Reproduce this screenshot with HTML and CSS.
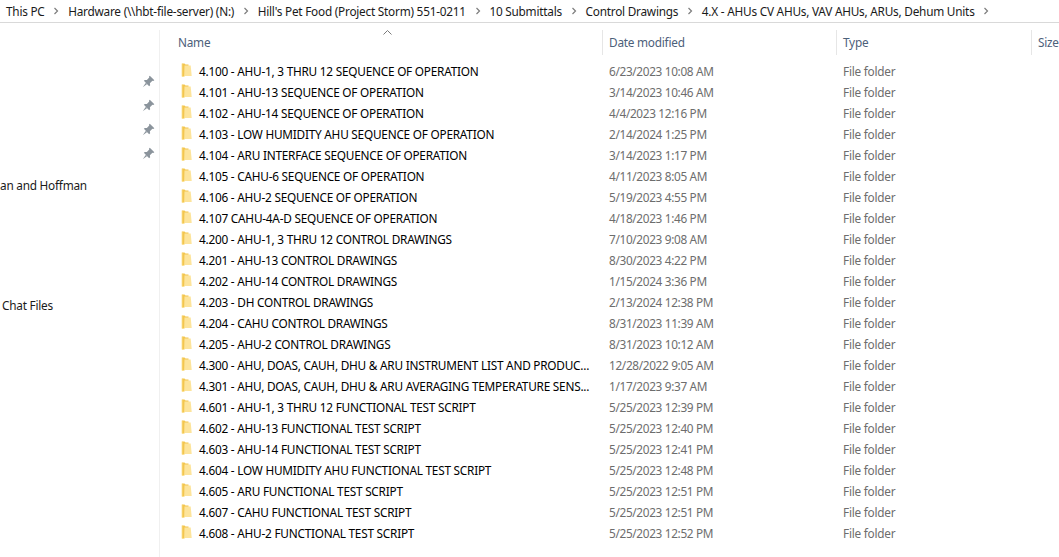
FILE: index.html
```html
<!DOCTYPE html>
<html lang="en">
<head>
<meta charset="utf-8">
<title>4.X - AHUs CV AHUs, VAV AHUs, ARUs, Dehum Units</title>
<link rel="stylesheet" href="styles.css">
</head>
<body>
<svg class="defs" width="0" height="0" aria-hidden="true">
  <defs>
    <symbol id="folder" viewBox="0 0 11 14">
      <path d="M1 .5h2.5l1 1H7.5v10L3 13.5H1z" fill="#f3c64f"/>
      <path d="M3.5 2.5h6.2l1 10.5H3.2z" fill="#fde49b"/>
      <path d="M1 .5v13h2" fill="none" stroke="#fbe08e" stroke-width=".8"/>
    </symbol>
    <symbol id="pin" viewBox="0 0 12 12">
      <path d="M7.2.6l4.2 4.2-1 .8-.8-.3L7.3 7.5l.2 1.9-.9.9L1.7 5.4l.9-.9 1.9.2 2.2-2.3-.3-.8z" fill="#8b949c"/>
      <path d="M3.6 7.2L.7 11.3l4.1-2.9z" fill="#8b949c"/>
    </symbol>
    <symbol id="chev" viewBox="0 0 6 8">
      <path d="M1.5 1l3 3-3 3" fill="none" stroke="#7d7d7d" stroke-width="1.2"/>
    </symbol>
  </defs>
</svg>

<nav class="crumbs">
  <span>This PC</span><svg class="chev"><use href="#chev"/></svg>
  <span>Hardware (\\hbt-file-server) (N:)</span><svg class="chev"><use href="#chev"/></svg>
  <span>Hill's Pet Food (Project Storm) 551-0211</span><svg class="chev"><use href="#chev"/></svg>
  <span>10 Submittals</span><svg class="chev"><use href="#chev"/></svg>
  <span>Control Drawings</span><svg class="chev"><use href="#chev"/></svg>
  <span>4.X - AHUs CV AHUs, VAV AHUs, ARUs, Dehum Units</span><svg class="chev"><use href="#chev"/></svg>
</nav>

<div class="main">
  <aside class="side">
    <div class="pins">
      <svg class="pin"><use href="#pin"/></svg>
      <svg class="pin"><use href="#pin"/></svg>
      <svg class="pin"><use href="#pin"/></svg>
      <svg class="pin"><use href="#pin"/></svg>
    </div>
    <div class="side-item first">an and Hoffman</div>
    <div class="side-item second">Chat Files</div>
  </aside>

  <section class="list">
    <div class="head">
      <svg class="caret" width="9" height="5" viewBox="0 0 9 5"><path d="M.5 4.5l4-4 4 4" fill="none" stroke="#7a7a7a"/></svg>
      <div class="hcell hname">Name</div>
      <div class="hcell">Date modified</div>
      <div class="hcell">Type</div>
      <div class="hcell">Size</div>
    </div>
    <div class="rows">
      <div class="row"><div class="name"><svg class="folder"><use href="#folder"/></svg><span>4.100 - AHU-1, 3 THRU 12 SEQUENCE OF OPERATION</span></div><div class="date">6/23/2023 10:08 AM</div><div class="type">File folder</div></div>
      <div class="row"><div class="name"><svg class="folder"><use href="#folder"/></svg><span>4.101 - AHU-13 SEQUENCE OF OPERATION</span></div><div class="date">3/14/2023 10:46 AM</div><div class="type">File folder</div></div>
      <div class="row"><div class="name"><svg class="folder"><use href="#folder"/></svg><span>4.102 - AHU-14 SEQUENCE OF OPERATION</span></div><div class="date">4/4/2023 12:16 PM</div><div class="type">File folder</div></div>
      <div class="row"><div class="name"><svg class="folder"><use href="#folder"/></svg><span>4.103 - LOW HUMIDITY AHU SEQUENCE OF OPERATION</span></div><div class="date">2/14/2024 1:25 PM</div><div class="type">File folder</div></div>
      <div class="row"><div class="name"><svg class="folder"><use href="#folder"/></svg><span>4.104 - ARU INTERFACE SEQUENCE OF OPERATION</span></div><div class="date">3/14/2023 1:17 PM</div><div class="type">File folder</div></div>
      <div class="row"><div class="name"><svg class="folder"><use href="#folder"/></svg><span>4.105 - CAHU-6 SEQUENCE OF OPERATION</span></div><div class="date">4/11/2023 8:05 AM</div><div class="type">File folder</div></div>
      <div class="row"><div class="name"><svg class="folder"><use href="#folder"/></svg><span>4.106 - AHU-2 SEQUENCE OF OPERATION</span></div><div class="date">5/19/2023 4:55 PM</div><div class="type">File folder</div></div>
      <div class="row"><div class="name"><svg class="folder"><use href="#folder"/></svg><span>4.107 CAHU-4A-D SEQUENCE OF OPERATION</span></div><div class="date">4/18/2023 1:46 PM</div><div class="type">File folder</div></div>
      <div class="row"><div class="name"><svg class="folder"><use href="#folder"/></svg><span>4.200 - AHU-1, 3 THRU 12 CONTROL DRAWINGS</span></div><div class="date">7/10/2023 9:08 AM</div><div class="type">File folder</div></div>
      <div class="row"><div class="name"><svg class="folder"><use href="#folder"/></svg><span>4.201 - AHU-13 CONTROL DRAWINGS</span></div><div class="date">8/30/2023 4:22 PM</div><div class="type">File folder</div></div>
      <div class="row"><div class="name"><svg class="folder"><use href="#folder"/></svg><span>4.202 - AHU-14 CONTROL DRAWINGS</span></div><div class="date">1/15/2024 3:36 PM</div><div class="type">File folder</div></div>
      <div class="row"><div class="name"><svg class="folder"><use href="#folder"/></svg><span>4.203 - DH CONTROL DRAWINGS</span></div><div class="date">2/13/2024 12:38 PM</div><div class="type">File folder</div></div>
      <div class="row"><div class="name"><svg class="folder"><use href="#folder"/></svg><span>4.204 - CAHU CONTROL DRAWINGS</span></div><div class="date">8/31/2023 11:39 AM</div><div class="type">File folder</div></div>
      <div class="row"><div class="name"><svg class="folder"><use href="#folder"/></svg><span>4.205 - AHU-2 CONTROL DRAWINGS</span></div><div class="date">8/31/2023 10:12 AM</div><div class="type">File folder</div></div>
      <div class="row"><div class="name"><svg class="folder"><use href="#folder"/></svg><span>4.300 - AHU, DOAS, CAUH, DHU &amp; ARU INSTRUMENT LIST AND PRODUC...</span></div><div class="date">12/28/2022 9:05 AM</div><div class="type">File folder</div></div>
      <div class="row"><div class="name"><svg class="folder"><use href="#folder"/></svg><span>4.301 - AHU, DOAS, CAUH, DHU &amp; ARU AVERAGING TEMPERATURE SENS...</span></div><div class="date">1/17/2023 9:37 AM</div><div class="type">File folder</div></div>
      <div class="row"><div class="name"><svg class="folder"><use href="#folder"/></svg><span>4.601 - AHU-1, 3 THRU 12 FUNCTIONAL TEST SCRIPT</span></div><div class="date">5/25/2023 12:39 PM</div><div class="type">File folder</div></div>
      <div class="row"><div class="name"><svg class="folder"><use href="#folder"/></svg><span>4.602 - AHU-13 FUNCTIONAL TEST SCRIPT</span></div><div class="date">5/25/2023 12:40 PM</div><div class="type">File folder</div></div>
      <div class="row"><div class="name"><svg class="folder"><use href="#folder"/></svg><span>4.603 - AHU-14 FUNCTIONAL TEST SCRIPT</span></div><div class="date">5/25/2023 12:41 PM</div><div class="type">File folder</div></div>
      <div class="row"><div class="name"><svg class="folder"><use href="#folder"/></svg><span>4.604 - LOW HUMIDITY AHU FUNCTIONAL TEST SCRIPT</span></div><div class="date">5/25/2023 12:48 PM</div><div class="type">File folder</div></div>
      <div class="row"><div class="name"><svg class="folder"><use href="#folder"/></svg><span>4.605 - ARU FUNCTIONAL TEST SCRIPT</span></div><div class="date">5/25/2023 12:51 PM</div><div class="type">File folder</div></div>
      <div class="row"><div class="name"><svg class="folder"><use href="#folder"/></svg><span>4.607 - CAHU FUNCTIONAL TEST SCRIPT</span></div><div class="date">5/25/2023 12:51 PM</div><div class="type">File folder</div></div>
      <div class="row"><div class="name"><svg class="folder"><use href="#folder"/></svg><span>4.608 - AHU-2 FUNCTIONAL TEST SCRIPT</span></div><div class="date">5/25/2023 12:52 PM</div><div class="type">File folder</div></div>
    </div>
  </section>
</div>
</body>
</html>
```
FILE: styles.css
```css
* { box-sizing: border-box; }
html, body { height: 100%; }
body {
  margin: 0;
  overflow: hidden;
  background: #fff;
  color: #000;
  font-family: "Noto Sans", "Open Sans", sans-serif;
  font-size: 11.8px;
  line-height: 16px;
  letter-spacing: -0.23px;
  display: flex;
  flex-direction: column;
}
.defs { display: block; height: 0; }

.crumbs {
  flex: none;
  height: 23px;
  padding: 0 0 1px 6px;
  display: flex;
  align-items: center;
  border-bottom: 1px solid #d9d9d9;
  white-space: nowrap;
  color: #1a1a1a;
}
.chev { width: 6px; height: 8px; margin: 1px 8.8px 0; flex: none; }

.main { flex: 1; display: flex; min-height: 0; }

.side {
  flex: none;
  width: 160px;
  border-right: 1px solid #f0f0f0;
  margin-top: 7px;
  overflow: hidden;
  white-space: nowrap;
}
.pins {
  display: flex;
  flex-direction: column;
  align-items: flex-end;
  gap: 11px;
  padding: 45px 4px 0 0;
}
.pin { width: 13px; height: 13px; display: block; }
.side-item { color: #1a1a1a; }
.first { margin-top: 17px; }
.second { margin-top: 104px; padding-left: 2px; }

.list { flex: 1; min-width: 0; position: relative; }
.head, .row {
  display: grid;
  grid-template-columns: 442px 234px 195px 1fr;
}
.head { height: 30px; margin-top: 7px; }
.hcell {
  height: 25px;
  padding: 4px 0 0 6px;
  color: #4c607a;
  border-left: 1px solid #e6e6e6;
  white-space: nowrap;
}
.hname { padding-left: 18px; border-left: 0; }
.caret { position: absolute; left: 223px; top: 7px; }

.row { height: 21px; align-items: center; white-space: nowrap; }
.name { display: flex; align-items: center; padding-left: 21px; overflow: hidden; }
.folder { width: 11px; height: 14px; flex: none; margin: -2px 7px 0 0; }
.date, .type { color: #6d6d6d; padding-left: 7px; }
.date { letter-spacing: -0.33px; }
```
